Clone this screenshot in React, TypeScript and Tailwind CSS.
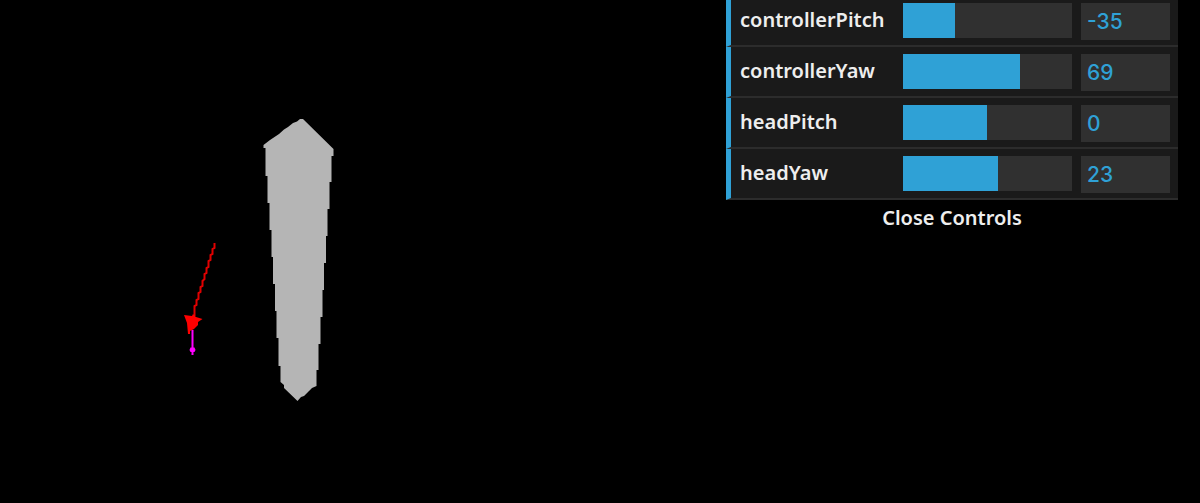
import { useState } from "react";

type Control = { name: string; value: number; min: number; max: number };

const initialControls: Control[] = [
  { name: "controllerPitch", value: -35, min: -90, max: 90 },
  { name: "controllerYaw", value: 69, min: -180, max: 180 },
  { name: "headPitch", value: 0, min: -90, max: 90 },
  { name: "headYaw", value: 23, min: -180, max: 180 },
];

function ControlRow({ control, onChange }: { control: Control; onChange: (value: number) => void }) {
  const { name, value, min, max } = control;
  const fill = ((value - min) / (max - min)) * 100;
  return (
    <li className="flex h-[51px] items-start border-b-2 border-l-[5px] border-b-[#2c2c2c] border-l-[#2fa1d6] bg-[#1a1a1a] pt-[7px] pr-2 pl-[9px]">
      <label htmlFor={name} className="w-[163px] shrink-0 text-[20px] leading-[34px] font-semibold text-[#eeeeee]">
        {name}
      </label>
      <input
        id={name}
        type="range"
        min={min}
        max={max}
        value={value}
        onChange={(e) => onChange(Number(e.target.value))}
        className="h-[35px] min-w-0 flex-1 cursor-ew-resize appearance-none bg-[#303030] [&::-webkit-slider-thumb]:size-0 [&::-webkit-slider-thumb]:appearance-none"
        style={{ backgroundImage: `linear-gradient(to right, #2fa1d6 ${fill}%, transparent ${fill}%)` }}
      />
      <input
        type="text"
        aria-label={`${name} value`}
        value={value}
        onChange={(e) => onChange(Number(e.target.value) || 0)}
        className="ml-[9px] h-[37px] w-[89px] bg-[#303030] px-[6px] font-['Inter',sans-serif] text-[21px] font-medium text-[#2fa1d6] outline-none"
      />
    </li>
  );
}

function Scene() {
  return (
    <svg className="h-[503px] w-[400px] shrink-0" viewBox="0 0 400 503" role="img" aria-label="Controller and head model">
      <path
        d="M300 119H303L333.500 149V156H331.500V182H329.500V209H327.500V236H326V263H324V290H322.500V317H320.500V344H318.500V370H316.500V386L312 388L309 391L304 396L301 397L297.500 401L284 388V385L280.500 382V366H278.500V338H276.500V311H275V284H273V257H271.500V230H269.500V203H267.500V176H265.500V148H263.500V145L270 140L279 134L284 129.500L288 127L293 123L297 121.500Z"
        fill="#b5b5b5"
      />
      <path d="M214.500 243V248L212.500 249V254L210.500 255V260L208.500 261V267L206.500 268V273L204.500 274V279L202.500 281V286L200.500 287V292L198.500 293V299L196.500 300V305L194.500 306V316" fill="none" stroke="#e00000" strokeWidth="2" />
      <path d="M184 315L192 316L193 314L196 317L202.500 319L198 322V325L194 329L190 331V334H188L187 323Z" fill="#ff0000" />
      <path d="M192.500 330V355" stroke="#ff00ff" strokeWidth="2" />
      <path d="M190.500 347.500H194.500L195.500 350L194.500 352H190.500L189.500 350Z" fill="#ff00ff" />
    </svg>
  );
}

export default function App() {
  const [controls, setControls] = useState(initialControls);
  const [open, setOpen] = useState(true);

  const update = (name: string, value: number) =>
    setControls((all) => all.map((c) => (c.name === name ? { ...c, value } : c)));

  return (
    <main className="flex min-h-screen items-start justify-between overflow-hidden bg-black pr-[22px] font-['Noto_Sans',sans-serif]">
      <Scene />
      <aside className="-mt-1 w-[452px]">
        {open && (
          <ul>
            {controls.map((c) => (
              <ControlRow key={c.name} control={c} onChange={(v) => update(c.name, v)} />
            ))}
          </ul>
        )}
        <button
          type="button"
          onClick={() => setOpen(!open)}
          className="block h-9 w-full text-center text-[20px] leading-[34px] font-semibold text-[#eeeeee]"
        >
          {open ? "Close Controls" : "Open Controls"}
        </button>
      </aside>
    </main>
  );
}
